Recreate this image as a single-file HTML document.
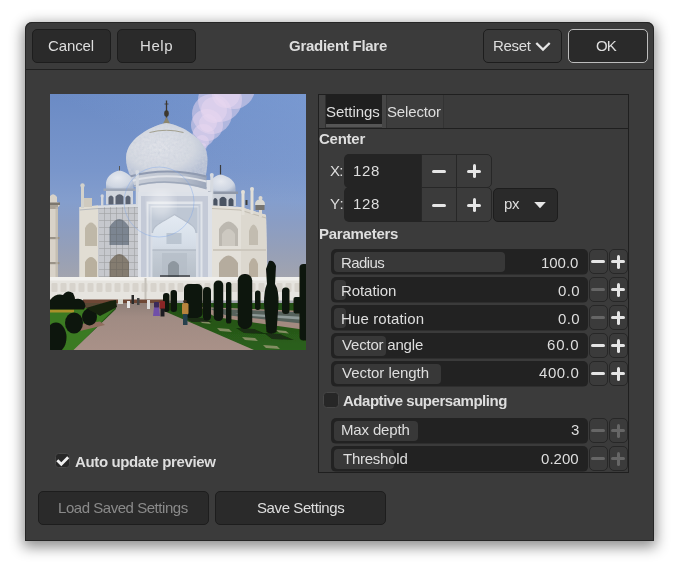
<!DOCTYPE html>
<html><head><meta charset="utf-8"><title>Gradient Flare</title>
<style>
html,body{margin:0;padding:0;background:#fff;}
body{width:679px;height:569px;position:relative;overflow:hidden;font-family:"Liberation Sans",sans-serif;font-size:15px;color:#dedede;}
.abs{position:absolute;box-sizing:border-box;}
#win{left:25px;top:22px;width:629px;height:519px;background:#3b3b3b;border-radius:7px 7px 0 0;box-shadow:inset 0 0 0 1px #262626,0 4px 14px 2px rgba(0,0,0,0.45);}
.btn{background:#2a2a2a;border:1px solid #1d1d1d;border-radius:5px;}
.b{font-weight:bold;}
.sb{background:#3b3b3b;border:1px solid #272727;}
.sb2{background:#3b3b3b;border:1px solid #272727;border-radius:5px;}
.mi{background:#e6e6e6;border-radius:1.5px;}
.mi.dis{background:#666;}
.t{position:absolute;white-space:nowrap;line-height:17px;will-change:transform;}
</style></head><body>
<div id="win" class="abs"></div>

<div class="abs" style="left:26px;top:69px;width:627px;height:1px;background:#202020;"></div>
<div class="abs btn" style="left:32px;top:29px;width:78.5px;height:34px;"></div>
<div class="abs btn" style="left:117px;top:29px;width:79px;height:34px;"></div>
<div class="abs btn" style="left:483px;top:29px;width:78.5px;height:34px;background:#393939;"></div>
<div class="abs btn" style="left:568px;top:29px;width:79.5px;height:34px;border-color:#bdbdbd;"></div>
<svg class="abs" style="left:534px;top:41px" width="18" height="12" viewBox="0 0 18 12"><path d="M2.3 2 L9 8.6 L15.700 2" fill="none" stroke="#e6e6e6" stroke-width="2.300"/></svg>
<!--PHOTO--><svg id="photo" class="abs" style="left:50px;top:94px" width="256" height="256" viewBox="0 0 256 256">
<defs>
 <linearGradient id="sky" x1="0" y1="0" x2="0" y2="1">
  <stop offset="0" stop-color="#6b8bc5"/><stop offset="0.3" stop-color="#7996cb"/><stop offset="0.42" stop-color="#849ecd"/><stop offset="0.5" stop-color="#8a9dc4"/><stop offset="0.6" stop-color="#949fb9"/><stop offset="0.72" stop-color="#a2a4ae"/>
 </linearGradient>
 <linearGradient id="skyr" x1="0" y1="1" x2="1" y2="0">
  <stop offset="0.5" stop-color="#86a6dc" stop-opacity="0"/><stop offset="1" stop-color="#86a6dc" stop-opacity="0.5"/>
 </linearGradient>
 <radialGradient id="dome" cx="0.42" cy="0.45" r="0.62">
  <stop offset="0" stop-color="#e1e3e9"/><stop offset="0.65" stop-color="#d5d9e1"/><stop offset="1" stop-color="#b4bed3"/>
 </radialGradient>
 <radialGradient id="sdome" cx="0.42" cy="0.4" r="0.7">
  <stop offset="0" stop-color="#e6e9ef"/><stop offset="0.7" stop-color="#cfd6e2"/><stop offset="1" stop-color="#aab6cc"/>
 </radialGradient>
 <linearGradient id="iwan" x1="0" y1="0" x2="0" y2="1">
  <stop offset="0" stop-color="#e4ebf3"/><stop offset="0.45" stop-color="#d6dee8"/><stop offset="1" stop-color="#bcc4ce"/>
 </linearGradient>
 <linearGradient id="drum" x1="0" y1="0" x2="1" y2="0">
  <stop offset="0" stop-color="#c9ced8"/><stop offset="0.6" stop-color="#bdc4d0"/><stop offset="1" stop-color="#9ca6ba"/>
 </linearGradient>
 <linearGradient id="path" x1="0" y1="0" x2="0" y2="1">
  <stop offset="0" stop-color="#8f7f78"/><stop offset="0.3" stop-color="#a08b83"/><stop offset="1" stop-color="#a99188"/>
 </linearGradient>
 <linearGradient id="grass" x1="0" y1="0" x2="0" y2="1">
  <stop offset="0" stop-color="#234f16"/><stop offset="1" stop-color="#2b601b"/>
 </linearGradient>
 <pattern id="scaf" width="6" height="7" patternUnits="userSpaceOnUse"><path d="M0.500 0 V7 M0 0.500 H6" stroke="#4a4a48" stroke-width="0.65" fill="none"/></pattern>
 <pattern id="panel" width="9" height="30" patternUnits="userSpaceOnUse"><rect x="1.500" y="9" width="6" height="9" rx="1" fill="#cdc8c0"/></pattern>
 <filter id="marble" x="0" y="0" width="1" height="1"><feTurbulence type="fractalNoise" baseFrequency="0.38" numOctaves="2" seed="7" result="n"/><feColorMatrix in="n" type="matrix" values="0 0 0 0 0.6  0 0 0 0 0.64  0 0 0 0 0.72  0.8 0.8 0.8 0 -0.95" result="m"/><feComposite in="m" in2="SourceAlpha" operator="in" result="mm"/><feMerge><feMergeNode in="SourceGraphic"/><feMergeNode in="mm"/></feMerge></filter>
 <filter id="b1"><feGaussianBlur stdDeviation="0.55"/></filter>
 <filter id="b2"><feGaussianBlur stdDeviation="1.2"/></filter>
 <filter id="b4"><feGaussianBlur stdDeviation="4"/></filter>
 <clipPath id="pc"><rect width="256" height="256"/></clipPath>
</defs>
<g clip-path="url(#pc)">
<rect width="256" height="256" fill="url(#sky)"/>
<rect width="256" height="125" fill="url(#skyr)"/>
<!-- flare -->
<g fill="#e8d6f0" fill-opacity="0.52">
 <circle cx="184" cy="-6" r="21"/><circle cx="170" cy="6" r="22"/><circle cx="162" cy="20" r="20"/><circle cx="157" cy="31" r="16"/><circle cx="153.500" cy="41" r="11"/><circle cx="152" cy="48" r="7"/><circle cx="152.500" cy="53" r="4"/><circle cx="154" cy="57.500" r="2.500"/>
 <circle cx="176" cy="0" r="14"/><circle cx="164" cy="16" r="13"/><circle cx="158" cy="29" r="9"/>
</g>
<g filter="url(#b1)">
<!-- left minaret -->
<path d="M0 102 Q3.500 98 7 103 L7 108 L9.500 109 L9.500 112 L8 113 L8 184 L0 184 Z" fill="#d8d2c8"/>
<rect x="0" y="108.500" width="10" height="2.500" fill="#7d776e"/>
<rect x="0" y="111" width="8" height="4" fill="#aaa296"/>
<rect x="0" y="143" width="9.500" height="2.200" fill="#9a9388"/>
<rect x="0" y="168" width="9.500" height="2.200" fill="#9a9388"/>
<rect x="5.500" y="113" width="2.500" height="71" fill="#bdb6aa" opacity="0.7"/>
<!-- main dome -->
<path d="M116.500 6.500 V30" stroke="#3c382e" stroke-width="1.300"/>
<path d="M114.500 10 H118.500" stroke="#3c382e" stroke-width="0.8"/>
<ellipse cx="116.500" cy="19.500" rx="2.300" ry="3.200" fill="#3c382e"/>
<path d="M116.500 23 L120.500 30.500 L112.500 30.500 Z" fill="#8c866e"/>
<path d="M116.500 29 C 124 30 134 34 139 38 C 150 45 157.500 54 157.500 65 C 157.500 72 156.500 78 155.500 83 L81 83 C 78 78 76 71 76 64 C 76 53 84 44 94 38 C 100 34 109 30 116.500 29 Z" fill="url(#dome)" filter="url(#marble)"/>
<path d="M99.500 38.500 Q116.500 34 133.500 38.500" fill="none" stroke="#8f8a70" stroke-width="0.900" opacity="0.8"/>
<rect x="86" y="86" width="76" height="13" fill="#dfe2e8"/>
<!-- drum -->
<path d="M80 82 Q116.500 72 156.500 82 L156.500 95.500 Q116.500 84 84.500 93 Z" fill="url(#drum)"/>
<path d="M80 82.500 Q116.500 72.500 156.500 82.500" fill="none" stroke="#8f9ab0" stroke-width="2.200"/>
<path d="M82 87 Q116.500 77.500 156.500 87.500" fill="none" stroke="#dfe2e8" stroke-width="2"/>
<path d="M84 92 Q116.500 83 156.500 94" fill="none" stroke="#9ea8ba" stroke-width="1.600"/>
<!-- left chhatri -->
<path d="M69.500 72 V78" stroke="#555" stroke-width="1"/>
<path d="M69.500 76.500 C 78 78 84 84 83.500 91 L83.500 95 L56 95 L56 91 C 55.500 84 61 78 69.500 76.500 Z" fill="url(#sdome)"/>
<rect x="53.500" y="94.500" width="32" height="2.500" fill="#9ea7b7"/>
<rect x="56" y="97" width="27" height="13.500" fill="#d0d5dd"/>
<path d="M58.500 110.500 V103.500 Q61 99.500 63.500 103.500 V110.500 Z M65.500 110.500 V102.500 Q69.500 98 73.500 102.500 V110.500 Z M75.500 110.500 V103.500 Q78 99.500 80.500 103.500 V110.500 Z" fill="#5a6272"/>
<!-- right chhatri -->
<path d="M170.500 71 V82" stroke="#3a3a3a" stroke-width="1.200"/>
<path d="M170.500 80.500 C 179 82 186 88 185.500 94 L185.500 98 L160.500 98 L160.500 94 C 160 88 162 82 170.500 80.500 Z" fill="url(#sdome)"/>
<rect x="158" y="97.500" width="30" height="2.500" fill="#8f98a8"/>
<rect x="161" y="100" width="25" height="12" fill="#cbd0d8"/>
<path d="M163 112 V106 Q165.200 102 167.500 106 V112 Z M169.500 112 V105 Q173 100.500 176.500 105 V112 Z M178.500 112 V106 Q181 102 183.500 106 V112 Z" fill="#4a5262"/>
<!-- building body -->
<path d="M29.500 113 L48 111.500 L88 110 L88 98 L162 98 L162 111.500 L190 113 L216 121 L217 184 L29.500 184 Z" fill="#dadde2"/>
<path d="M29.500 113 L48 111.500 L48 184 L29.500 184 Z" fill="#e1ddd3"/>
<path d="M162 111.500 L190 113 L216 121 L217 184 L162 184 Z" fill="#e3e0d9"/>
<path d="M191 113 L216 121 L217 184 L191 184 Z" fill="#dcd8cf"/>
<!-- cornice lines -->
<path d="M29.500 116 L48 114.500 L88 113.500" stroke="#b5b8bc" stroke-width="1.200" fill="none"/>
<path d="M162 114.500 L190 116 L216 124" stroke="#c2bdb2" stroke-width="1.200" fill="none"/>
<!-- pinnacles -->
<rect x="31" y="92" width="3" height="22" fill="#d3d2cc"/><circle cx="32.500" cy="91.500" r="2.200" fill="#d3d2cc"/>
<rect x="34" y="104" width="8" height="9" fill="#cfcabf"/>
<rect x="51" y="103" width="2.400" height="9" fill="#d3d6dc"/><circle cx="52.200" cy="102" r="1.700" fill="#d3d6dc"/>
<rect x="85.800" y="79" width="3" height="31" fill="#d6dae0"/><circle cx="87.300" cy="78" r="2" fill="#d6dae0"/>
<rect x="160.300" y="82" width="3" height="30" fill="#d6dae0"/><circle cx="161.800" cy="81" r="2" fill="#d6dae0"/>
<rect x="191.500" y="99" width="3" height="22" fill="#e2dfd8"/><circle cx="193" cy="98" r="2" fill="#e2dfd8"/>
<rect x="200.500" y="96" width="3" height="24" fill="#e2dfd8"/><circle cx="202" cy="95" r="2" fill="#e2dfd8"/>
<rect x="209" y="105" width="3" height="18" fill="#dcd8d0"/><circle cx="210.500" cy="104" r="2" fill="#dcd8d0"/>
<path d="M205 111 Q205 105.500 210 105.500 Q215 105.500 215 111 Z" fill="#d9d8d2"/><rect x="205.500" y="111" width="9" height="5" fill="#77756f"/><rect x="195.500" y="106" width="2" height="5" fill="#3c3c3a"/>
<!-- left chamfer arches -->
<path d="M35 152 V134 Q41 123 47 134 V152 Z" fill="#bfb8a8"/>
<path d="M35 184 V168 Q41 158 47 168 V184 Z" fill="#b9b09e"/>
<!-- scaffold face -->
<rect x="48" y="114" width="40" height="70" fill="#8a8c8e" opacity="0.25"/>
<path d="M59.500 151 V133 Q69.300 117 79 133 V151 Z" fill="#7c8591"/>
<path d="M59.500 184 V168 Q69.300 152 79 168 V184 Z" fill="#847c70"/>
<rect x="49" y="113" width="40" height="71" fill="url(#scaf)" opacity="0.3"/>
<!-- pishtaq -->
<rect x="88" y="98" width="74" height="86" fill="#dde1e8"/>
<rect x="91" y="102" width="67" height="82" fill="#aeb8c8" opacity="0.55"/>
<rect x="96.500" y="107.500" width="56" height="76.500" fill="#e0e4ea"/>
<path d="M98.500 184 V110 H150.500 V184 Z" fill="#c3cbd8"/>
<path d="M100.500 184 V112 H148.500 V184 Z" fill="#d9dee6"/>
<path d="M101.500 139 V113.500 H147.500 V139 H146 C146 131 136 128 124.500 120.500 C113 128 102.500 131 102.500 139 Z" fill="#bec7d4"/>
<path d="M102.500 184 V139 C102.500 131 113 128 124.500 120.500 C136 128 146 131 146 139 V184 Z" fill="url(#iwan)"/>
<path d="M102.500 139 C102.500 131 113 128 124.500 120.500 C136 128 146 131 146 139" fill="none" stroke="#b4bdca" stroke-width="1.200"/>
<rect x="102.500" y="156" width="43.500" height="28" fill="#aeb6c0" opacity="0.35"/>
<rect x="112" y="159" width="25" height="25" fill="#b4bcc6" opacity="0.7"/>
<path d="M118 184 V171 Q123.500 163 129 171 V184 Z" fill="#8a929a" opacity="0.9"/>
<rect x="116.500" y="139" width="15" height="11" fill="#a9b4c1" opacity="0.6"/>
<path d="M102.500 156 H146" stroke="#b3bbc6" stroke-width="1.500"/>
<rect x="110" y="181" width="30" height="3" fill="#33343a" opacity="0.7"/>
<!-- right arches -->
<path d="M169 152 V135 Q178.500 120 188 135 V152 Z" fill="#bcb8b0"/>
<path d="M169 184 V169 Q178.500 154 188 169 V184 Z" fill="#b5ac9e"/>
<path d="M172 152 V140 Q178.500 130 185 140 V152 Z" fill="#cdc9c1"/>
<path d="M199 151 V137 Q203.500 124 208 137 V151 Z" fill="#c2bcb0"/>
<path d="M199 184 V170 Q203.500 158 208 170 V184 Z" fill="#b9af9f"/>
<rect x="163" y="155" width="53" height="2" fill="#cdc8be"/>
<!-- plinth -->
<rect x="0" y="183" width="251" height="23.500" fill="#e6e4df"/>
<rect x="0" y="183" width="251" height="3.500" fill="#f1f0ed"/>
<rect x="0" y="188" width="251" height="18" fill="url(#panel)" opacity="0.6"/>
<rect x="94.500" y="184" width="2" height="22" fill="#c5c1ba"/>
<rect x="33" y="205.500" width="80" height="4" fill="#6e4636"/>
</g>
<!-- ground -->
<g filter="url(#b1)">
<path d="M0 209 H256 V256 H0 Z" fill="url(#grass)"/>
<path d="M0 213 H66 L24 256 H0 Z" fill="#3b7a22"/>
<path d="M0 209 H70 V214 H0 Z" fill="#5a4a36"/>
<path d="M66 209 L113 209 L114 217 L204 256 L23.500 256 L66 215 Z" fill="url(#path)"/>
<!-- water channel -->
<path d="M150 213 L256 217 L256 236 L165 223 Z" fill="#a38a80"/>
<path d="M159 214.500 L256 218.500 L256 230 L175 221 Z" fill="#56625c"/>
<path d="M185 219 L256 223 L256 226 L195 221.500 Z" fill="#8e9a98"/>
<rect x="0" y="215.500" width="24" height="3" fill="#a8902a"/>
<path d="M22 231 L50 227.500 L55 231 L30 237 Z" fill="#8f6e5e"/>
<!-- stepping stones -->
<g fill="#9a9a74" opacity="0.8">
 <path d="M167 234 l12 1 l3 3 l-12 -1 Z M192 243 l13 1 l3 3 l-13 -1 Z M213 251 l14 1 l3 3 l-14 -1 Z M226 236 l10 1 l3 2.500 l-10 -1 Z M150 227 l9 1 l2 2 l-9 -1 Z"/>
</g>
</g>
<!-- trees / bushes -->
<g fill="#0e140c" filter="url(#b1)">
 <ellipse cx="6" cy="243.500" rx="10.500" ry="15"/>
 <ellipse cx="24" cy="229" rx="9" ry="10.500"/>
 <ellipse cx="39.500" cy="223" rx="7.500" ry="8.500"/>
 <path d="M36 214 L60 207 L66 206 L67 213 L50 222 Z" fill="#162210"/>
 <path d="M0 206 Q6 199 13 201 Q17 195 23 199 Q25 203 25 205 Q34 203 35.500 212 L34 215.500 L0 215.500 Z"/>
 <rect x="113" y="199" width="6.500" height="19" rx="3"/>
 <rect x="120.500" y="196" width="6.500" height="22" rx="3"/>
 <rect x="134" y="190" width="18.500" height="34" rx="5"/>
 <rect x="153" y="193" width="8" height="33.500" rx="4"/>
 <rect x="163.700" y="186.500" width="9.500" height="40.500" rx="4.500"/>
 <rect x="176" y="188" width="5.400" height="41.500" rx="2.600"/>
 <rect x="187.800" y="180" width="14.400" height="55" rx="6.500"/>
 <rect x="205" y="196.500" width="5.500" height="19.500" rx="2.700"/>
 <path d="M219 167 Q224 166 226 172 L225 190 Q229 196 228.500 210 L226.500 238 Q221 241.500 216.500 238 L214 210 Q214 196 217 190 L216 175 Z"/>
 <rect x="232" y="193.500" width="7.500" height="26.500" rx="3.500"/>
 <rect x="249.500" y="170" width="10" height="76.500" rx="4"/>
 <rect x="243.500" y="203" width="8" height="16.500" rx="2"/>
 <path d="M134 224 l18 0 l10 4 l-20 0 Z M186 234 l18 1 l12 5 l-22 -1 Z M214 239 l16 1 l14 6 l-22 -1 Z" opacity="0.6"/>
</g>
<!-- people -->
<g filter="url(#b1)">
 <rect x="132" y="209" width="6.500" height="11.500" rx="1.500" fill="#b8843e"/><rect x="133" y="220" width="4.500" height="11" fill="#27404e"/><circle cx="135" cy="207.500" r="1.800" fill="#3a2a1e"/>
 <rect x="109.500" y="207" width="5.500" height="8" rx="1" fill="#8a2828"/><rect x="110.500" y="214.500" width="4" height="8" fill="#1e1e22"/>
 <rect x="104" y="208" width="5" height="6" rx="1" fill="#3a2a5a"/><path d="M104 213.500 h5 l1 8.500 h-7 Z" fill="#6f4fa8"/>
 <rect x="97" y="206" width="3" height="9" fill="#ddd"/>
 <rect x="77" y="207" width="3" height="7" fill="#e8e8e8"/>
 <rect x="81.500" y="201" width="2.500" height="9" fill="#2a2a2a"/>
 <rect x="87" y="204" width="2.500" height="7" fill="#444"/>
 <rect x="68" y="205" width="5" height="5" fill="#d8d8d0"/>
</g>
<!-- glow -->
<circle cx="111" cy="110" r="13" fill="#ffffff" opacity="0.4" filter="url(#b4)"/>
<circle cx="109" cy="108" r="35" fill="none" stroke="#7aa2ea" stroke-width="0.7" opacity="0.55"/>
</g>
</svg>
<!--/PHOTO-->
<div class="abs" style="left:318px;top:94px;width:311px;height:379px;border:1px solid #1f1f1f;"></div>
<div class="abs" style="left:319px;top:95px;width:6px;height:33px;background:#424242;"></div>
<div class="abs" style="left:319px;top:128px;width:309px;height:1px;background:#1f1f1f;"></div>
<div class="abs" style="left:326px;top:95px;width:56px;height:29px;background:#1f1f1f;"></div>
<div class="abs" style="left:326px;top:124px;width:56px;height:3px;background:#555;"></div>
<div class="abs" style="left:325px;top:95px;width:1px;height:33px;background:#303030;"></div>
<div class="abs" style="left:382px;top:95px;width:4px;height:33px;background:#464646;"></div>
<div class="abs" style="left:386px;top:95px;width:58px;height:33px;background:#3d3d3d;border-left:1px solid #333;border-right:1px solid #333;"></div>
<div class="abs" style="left:344px;top:154px;width:78px;height:34px;background:#242424;border-radius:5px 0 0 5px;"></div>
<div class="abs sb" style="left:421px;top:154px;width:36px;height:34px;"></div>
<div class="abs sb" style="left:456px;top:154px;width:36px;height:34px;border-radius:0 5px 5px 0;"></div>
<div class="abs mi" style="left:432px;top:169.5px;width:14px;height:3.0px;"></div>
<div class="abs mi" style="left:467px;top:169.5px;width:14px;height:3.0px;"></div>
<div class="abs mi" style="left:472.5px;top:164px;width:3.0px;height:14px;"></div>
<div class="abs" style="left:344px;top:187px;width:78px;height:35px;background:#242424;border-radius:5px 0 0 5px;"></div>
<div class="abs sb" style="left:421px;top:187px;width:36px;height:35px;"></div>
<div class="abs sb" style="left:456px;top:187px;width:36px;height:35px;border-radius:0 5px 5px 0;"></div>
<div class="abs mi" style="left:432px;top:203.5px;width:14px;height:3.0px;"></div>
<div class="abs mi" style="left:467px;top:203.5px;width:14px;height:3.0px;"></div>
<div class="abs mi" style="left:472.5px;top:198px;width:3.0px;height:14px;"></div>
<div class="abs btn" style="left:492.5px;top:188px;width:65.0px;height:34px;"></div>
<svg class="abs" style="left:533px;top:201px" width="14" height="8" viewBox="0 0 14 8"><path d="M1.2 1 L12.800 1 L7 7.200 Z" fill="#e6e6e6"/></svg>
<div class="abs" style="left:331px;top:249px;width:257px;height:26px;background:linear-gradient(#222 0,#222 25px,#2e2e2e 25px);border-radius:5px;"></div>
<div class="abs" style="left:334px;top:252px;width:171px;height:20px;background:#383838;border-radius:4px;"></div>
<div class="abs sb2" style="left:588.5px;top:249px;width:19.5px;height:25px;"></div>
<div class="abs sb2" style="left:608.5px;top:249px;width:19.5px;height:25px;"></div>
<div class="abs mi" style="left:591px;top:260.0px;width:14px;height:3.0px;"></div>
<div class="abs mi" style="left:611px;top:260.0px;width:14px;height:3.0px;"></div>
<div class="abs mi" style="left:616.5px;top:254.5px;width:3.0px;height:14.0px;"></div>
<div class="abs" style="left:331px;top:277px;width:257px;height:26px;background:linear-gradient(#222 0,#222 25px,#2e2e2e 25px);border-radius:5px;"></div>
<div class="abs" style="left:334px;top:280px;width:12px;height:20px;background:#383838;border-radius:4px;"></div>
<div class="abs sb2" style="left:588.5px;top:277px;width:19.5px;height:25px;"></div>
<div class="abs sb2" style="left:608.5px;top:277px;width:19.5px;height:25px;"></div>
<div class="abs mi dis" style="left:591px;top:288.0px;width:14px;height:3.0px;"></div>
<div class="abs mi" style="left:611px;top:288.0px;width:14px;height:3.0px;"></div>
<div class="abs mi" style="left:616.5px;top:282.5px;width:3.0px;height:14.0px;"></div>
<div class="abs" style="left:331px;top:305px;width:257px;height:26px;background:linear-gradient(#222 0,#222 25px,#2e2e2e 25px);border-radius:5px;"></div>
<div class="abs" style="left:334px;top:308px;width:12px;height:20px;background:#383838;border-radius:4px;"></div>
<div class="abs sb2" style="left:588.5px;top:305px;width:19.5px;height:25px;"></div>
<div class="abs sb2" style="left:608.5px;top:305px;width:19.5px;height:25px;"></div>
<div class="abs mi dis" style="left:591px;top:316.0px;width:14px;height:3.0px;"></div>
<div class="abs mi" style="left:611px;top:316.0px;width:14px;height:3.0px;"></div>
<div class="abs mi" style="left:616.5px;top:310.5px;width:3.0px;height:14.0px;"></div>
<div class="abs" style="left:331px;top:333px;width:257px;height:26px;background:linear-gradient(#222 0,#222 25px,#2e2e2e 25px);border-radius:5px;"></div>
<div class="abs" style="left:334px;top:336px;width:52px;height:20px;background:#383838;border-radius:4px;"></div>
<div class="abs sb2" style="left:588.5px;top:333px;width:19.5px;height:25px;"></div>
<div class="abs sb2" style="left:608.5px;top:333px;width:19.5px;height:25px;"></div>
<div class="abs mi" style="left:591px;top:344.0px;width:14px;height:3.0px;"></div>
<div class="abs mi" style="left:611px;top:344.0px;width:14px;height:3.0px;"></div>
<div class="abs mi" style="left:616.5px;top:338.5px;width:3.0px;height:14.0px;"></div>
<div class="abs" style="left:331px;top:361px;width:257px;height:26px;background:linear-gradient(#222 0,#222 25px,#2e2e2e 25px);border-radius:5px;"></div>
<div class="abs" style="left:334px;top:364px;width:107px;height:20px;background:#383838;border-radius:4px;"></div>
<div class="abs sb2" style="left:588.5px;top:361px;width:19.5px;height:25px;"></div>
<div class="abs sb2" style="left:608.5px;top:361px;width:19.5px;height:25px;"></div>
<div class="abs mi" style="left:591px;top:372.0px;width:14px;height:3.0px;"></div>
<div class="abs mi" style="left:611px;top:372.0px;width:14px;height:3.0px;"></div>
<div class="abs mi" style="left:616.5px;top:366.5px;width:3.0px;height:14.0px;"></div>
<div class="abs" style="left:331px;top:418px;width:257px;height:26px;background:linear-gradient(#222 0,#222 25px,#2e2e2e 25px);border-radius:5px;"></div>
<div class="abs" style="left:334px;top:421px;width:84px;height:20px;background:#383838;border-radius:4px;"></div>
<div class="abs sb2" style="left:588.5px;top:418px;width:19.5px;height:25px;"></div>
<div class="abs sb2" style="left:608.5px;top:418px;width:19.5px;height:25px;"></div>
<div class="abs mi dis" style="left:591px;top:429.0px;width:14px;height:3.0px;"></div>
<div class="abs mi dis" style="left:611px;top:429.0px;width:14px;height:3.0px;"></div>
<div class="abs mi dis" style="left:616.5px;top:423.5px;width:3.0px;height:14.0px;"></div>
<div class="abs" style="left:331px;top:446px;width:257px;height:26px;background:linear-gradient(#222 0,#222 25px,#2e2e2e 25px);border-radius:5px;"></div>
<div class="abs" style="left:334px;top:449px;width:60px;height:20px;background:#383838;border-radius:4px;"></div>
<div class="abs sb2" style="left:588.5px;top:446px;width:19.5px;height:25px;"></div>
<div class="abs sb2" style="left:608.5px;top:446px;width:19.5px;height:25px;"></div>
<div class="abs mi dis" style="left:591px;top:457.0px;width:14px;height:3.0px;"></div>
<div class="abs mi dis" style="left:611px;top:457.0px;width:14px;height:3.0px;"></div>
<div class="abs mi dis" style="left:616.5px;top:451.5px;width:3.0px;height:14.0px;"></div>
<div class="abs" style="left:323px;top:392px;width:16px;height:16px;background:#272727;border:1px solid #474747;border-radius:3.5px;"></div>
<div class="abs" style="left:55px;top:453px;width:15px;height:15px;background:#272727;border:1px solid #474747;border-radius:3.5px;"></div>
<svg class="abs" style="left:55px;top:453px" width="15" height="15" viewBox="0 0 15 15"><path d="M2.300 7.200 L6.300 11.300 L13.200 4.300" fill="none" stroke="#efefef" stroke-width="2.800"/></svg>
<div class="abs btn" style="left:38px;top:491px;width:171px;height:33.5px;"></div>
<div class="abs btn" style="left:215px;top:491px;width:171px;height:33.5px;"></div>
<div class="t" style="left:47.75px;top:37.00px;letter-spacing:-0.108px;">Cancel</div>
<div class="t" style="left:140.30px;top:37.00px;letter-spacing:0.600px;">Help</div>
<div class="t b" style="left:289.30px;top:37.00px;letter-spacing:-0.263px;">Gradient Flare</div>
<div class="t" style="left:492.80px;top:37.00px;letter-spacing:-0.315px;">Reset</div>
<div class="t" style="left:595.80px;top:37.00px;letter-spacing:-0.980px;">OK</div>
<div class="t" style="left:326.20px;top:103.00px;letter-spacing:-0.051px;">Settings</div>
<div class="t" style="left:386.90px;top:103.00px;letter-spacing:-0.154px;">Selector</div>
<div class="t b" style="left:318.70px;top:130.00px;letter-spacing:-0.252px;">Center</div>
<div class="t" style="left:330.10px;top:162.00px;letter-spacing:-0.680px;">X:</div>
<div class="t" style="left:330.10px;top:195.00px;letter-spacing:0.220px;">Y:</div>
<div class="t" style="left:352.80px;top:162.00px;letter-spacing:0.720px;">128</div>
<div class="t" style="left:352.80px;top:195.00px;letter-spacing:0.720px;">128</div>
<div class="t" style="left:504.00px;top:195.00px;letter-spacing:-0.360px;">px</div>
<div class="t b" style="left:318.70px;top:225.00px;letter-spacing:-0.260px;">Parameters</div>
<div class="t" style="left:340.70px;top:254.00px;letter-spacing:-0.612px;">Radius</div>
<div class="t" style="left:340.70px;top:282.00px;letter-spacing:-0.077px;">Rotation</div>
<div class="t" style="left:340.70px;top:310.00px;letter-spacing:0.115px;">Hue rotation</div>
<div class="t" style="left:342.30px;top:336.00px;letter-spacing:-0.196px;">Vector angle</div>
<div class="t" style="left:342.30px;top:364.00px;letter-spacing:-0.045px;">Vector length</div>
<div class="t b" style="left:343.40px;top:392.00px;letter-spacing:-0.471px;">Adaptive supersampling</div>
<div class="t" style="left:340.70px;top:421.00px;letter-spacing:-0.157px;">Max depth</div>
<div class="t" style="left:342.80px;top:450.00px;letter-spacing:-0.247px;">Threshold</div>
<div class="t" style="left:541.20px;top:254.00px;letter-spacing:-0.045px;">100.0</div>
<div class="t" style="left:557.70px;top:282.00px;letter-spacing:0.360px;">0.0</div>
<div class="t" style="left:557.70px;top:310.00px;letter-spacing:0.360px;">0.0</div>
<div class="t" style="left:547.20px;top:336.00px;letter-spacing:0.840px;">60.0</div>
<div class="t" style="left:538.90px;top:364.00px;letter-spacing:0.585px;">400.0</div>
<div class="t" style="left:570.60px;top:421.00px;letter-spacing:0.000px;">3</div>
<div class="t" style="left:540.70px;top:450.00px;letter-spacing:0.045px;">0.200</div>
<div class="t b" style="left:74.50px;top:453.00px;letter-spacing:-0.370px;">Auto update preview</div>
<div class="t" style="left:58.30px;top:499.00px;letter-spacing:-0.460px;color:#8a8a8a;">Load Saved Settings</div>
<div class="t" style="left:256.60px;top:499.00px;letter-spacing:-0.405px;">Save Settings</div>
</body></html>
